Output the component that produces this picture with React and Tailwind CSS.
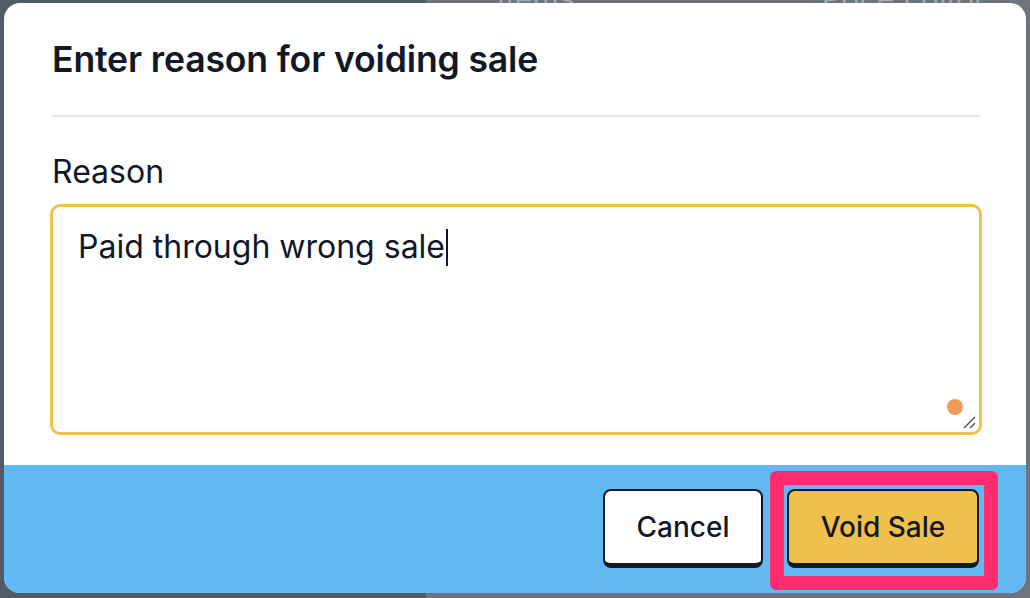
import React from "react";

export default function App() {
  return (
    <div
      className="relative h-[598px] w-[1030px] overflow-hidden"
      style={{ fontFamily: "Inter, 'Noto Sans', sans-serif" }}
    >
      {/* dimmed page behind */}
      <div className="flex h-full w-full">
        <div className="h-full w-[426px] bg-[#535a67]" />
        <div className="h-full flex-1 bg-[#6e737c]">
          <div className="-mt-[24px] flex text-[30px] text-[#a3a7ae]">
            <span className="ml-[71px]">Items</span>
            <span className="ml-[247px]">Price Editor</span>
          </div>
        </div>
      </div>

      {/* modal */}
      <div className="absolute left-[4px] top-[3px] flex h-[590px] w-[1022px] flex-col overflow-hidden rounded-2xl bg-white">
        <div className="flex flex-1 flex-col pl-12 pr-[46px]">
          <h2 className="pt-[35px] text-[35.6px] font-semibold leading-[43px] tracking-[-0.15px] text-[#111827]">
            Enter reason for voiding sale
          </h2>
          <div className="mt-[34px] h-[2px] bg-[#e5e7eb]" />
          <label className="mt-[31px] text-[32px] leading-[48px] text-[#111827]">
            Reason
          </label>
          <div className="relative -ml-[2px] -mr-[2px] mt-[8px] h-[231px] rounded-[10px] border-[3px] border-[#f2c24d] px-[25px] pt-[16px]">
            <div className="flex items-center text-[32px] leading-[48px] text-[#111827]">
              <span>Paid through wrong sale</span>
              <span className="ml-[1px] h-[37px] w-[2px] bg-[#111827]" />
            </div>
            <span className="absolute bottom-[17px] right-[16px] h-[16px] w-[16px] rounded-full bg-[#f09a5d]" />
            <svg
              className="absolute bottom-[2px] right-[2px]"
              width="16"
              height="16"
              viewBox="0 0 16 16"
            >
              <line x1="3" y1="14" x2="14" y2="3" stroke="#555" strokeWidth="1.5" />
              <line x1="9" y1="14" x2="14" y2="9" stroke="#555" strokeWidth="1.5" />
            </svg>
          </div>
        </div>

        <div className="mt-[30px] flex h-[128px] items-start justify-end gap-6 bg-[#62b9f2] pl-12 pr-[47px] pt-6">
          <button className="flex h-[79px] w-[160px] items-center justify-center rounded-lg border-2 border-b-[5px] border-[#111827] bg-white text-[28px] font-medium text-[#111827]">
            Cancel
          </button>
          <div className="relative">
            <span className="pointer-events-none absolute -bottom-[22px] -left-[17px] -right-[19px] -top-[18px] rounded-[6px] border-[14px] border-[#ff2d6f]" />
            <button className="relative flex h-[79px] w-[192px] items-center justify-center rounded-lg border-2 border-b-[5px] border-[#111827] bg-[#f0c04c] text-[28px] font-medium text-[#111827]">
              Void Sale
            </button>
          </div>
        </div>
      </div>
    </div>
  );
}
